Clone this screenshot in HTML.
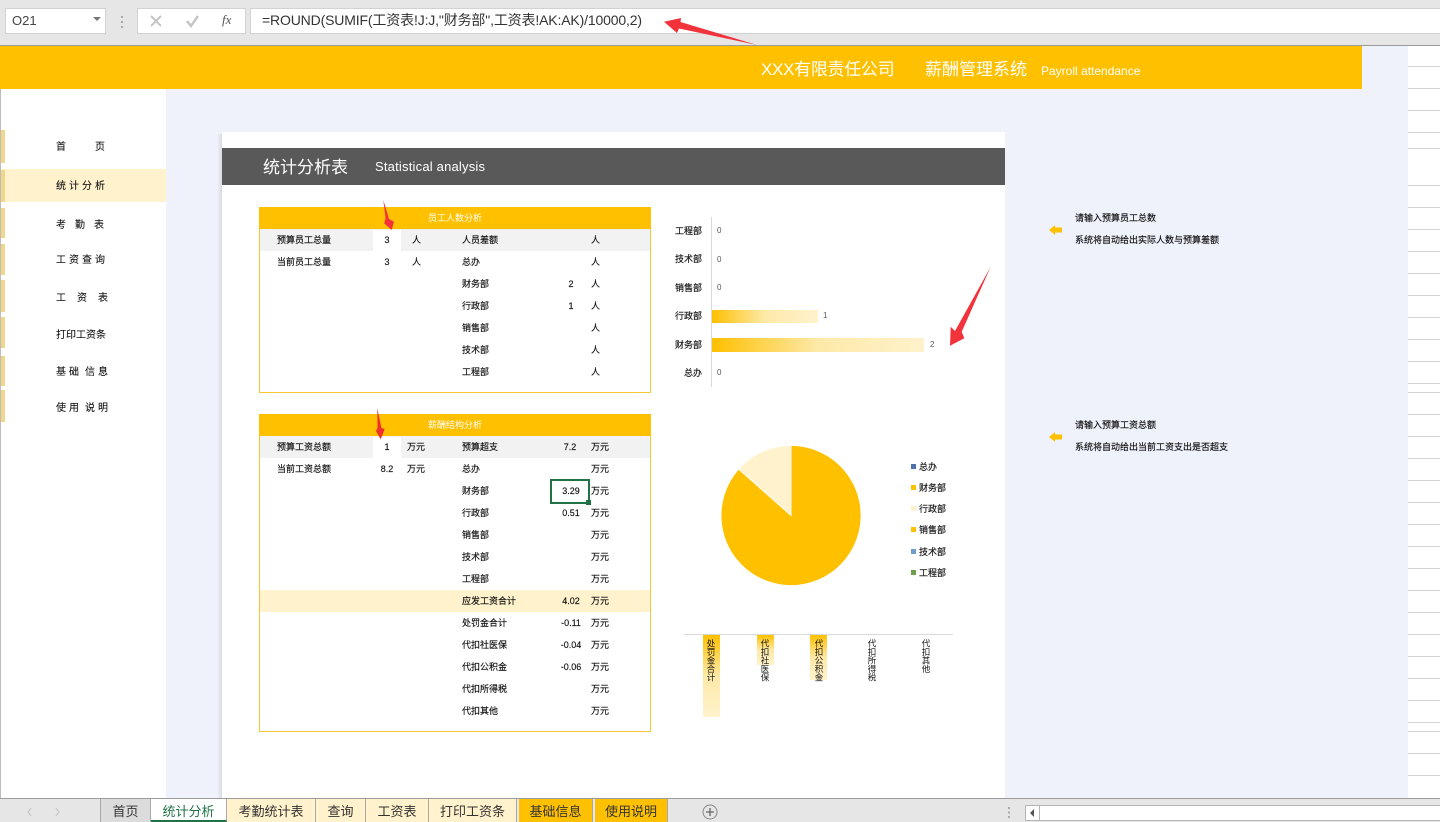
<!DOCTYPE html>
<html lang="zh-CN"><head><meta charset="utf-8"><title>统计分析</title>
<style>
html,body{margin:0;padding:0;width:1440px;height:822px;overflow:hidden;background:#fff}
body{position:relative;font-family:"Liberation Sans","Noto Sans CJK SC",sans-serif;color:#333}
.a{position:absolute}
.t{position:absolute;white-space:nowrap;font-size:9px;line-height:12px;color:#111;-webkit-text-stroke:.15px #111}
.w{color:#fff;-webkit-text-stroke:0}
.c{transform:translateX(-50%)}
.r{transform:translateX(-100%)}
.s{position:absolute;left:1px;width:4px;background:#f0d78c}
.g{position:absolute;left:1408px;width:32px;height:1px;background:#d4d4d4}
.v{position:absolute;font-size:8px;line-height:10px;color:#595959}
.l{position:absolute;left:911px;width:5px;height:5px}
.u{position:absolute;top:639px;writing-mode:vertical-rl;text-orientation:upright;font-size:8.5px;line-height:10px;color:#111;white-space:nowrap;transform:translateX(-50%)}
.tab{position:absolute;top:799px;height:23px;line-height:25px;text-align:center;font-size:13px;color:#333;border-right:1px solid #a8a8a8;box-sizing:border-box}
.n{font-size:10px;-webkit-text-stroke:.1px #111}
.gold{position:absolute;background:#f4c63a}
</style></head><body>

<!-- formula bar -->
<div class="a" style="left:0;top:0;width:1440px;height:45px;background:#e6e6e6"></div>
<div class="a" style="left:5px;top:8px;width:101px;height:26px;background:#fff;border:1px solid #d2d2d2;box-sizing:border-box"></div>
<div class="t" style="left:12px;top:14px;font-size:13px;line-height:14px;color:#444;-webkit-text-stroke:0">O21</div>
<svg class="a" style="left:92px;top:16px" width="10" height="6"><path d="M1 1H9L5 5Z" fill="#777"/></svg>
<svg class="a" style="left:120px;top:15px" width="4" height="14"><path d="M1 1h2v2H1zM1 6h2v2H1zM1 11h2v2H1z" fill="#aaa"/></svg>
<div class="a" style="left:137px;top:8px;width:109px;height:26px;background:#fff;border:1px solid #d2d2d2;box-sizing:border-box"></div>
<svg class="a" style="left:149px;top:14px" width="14" height="14"><path d="M2 2L12 12M12 2L2 12" stroke="#c4c4c4" stroke-width="2" fill="none"/></svg>
<svg class="a" style="left:185px;top:14px" width="15" height="14"><path d="M2 7L6 12L13 2" stroke="#c4c4c4" stroke-width="2.4" fill="none"/></svg>
<div class="t" style="left:222px;top:13px;font:italic 13px/14px 'Liberation Serif',serif;color:#555;-webkit-text-stroke:0">fx</div>
<div class="a" style="left:250px;top:8px;width:1190px;height:26px;background:#fff;border:1px solid #d2d2d2;border-right:0;box-sizing:border-box"></div>
<div class="t" style="left:262px;top:12px;font-size:14px;line-height:17px;color:#333;letter-spacing:-.15px;-webkit-text-stroke:0">=ROUND(SUMIF(工资表!J:J,"财务部",工资表!AK:AK)/10000,2)</div>
<div class="a" style="left:0;top:45px;width:1440px;height:1px;background:#9b9b9b"></div>

<!-- sheet backgrounds -->
<div class="a" style="left:166px;top:89px;width:1242px;height:709px;background:#eff2fa"></div>
<div class="a" style="left:1362px;top:46px;width:46px;height:43px;background:#eff2fa"></div>
<div class="a" style="left:0;top:46px;width:1362px;height:43px;background:#ffc000"></div>
<div class="a" style="left:0;top:89px;width:166px;height:709px;background:#fff"></div>
<div class="a" style="left:0;top:89px;width:1px;height:709px;background:#bdbdbd"></div>
<div class="g" style="top:66px"></div><div class="g" style="top:88px"></div><div class="g" style="top:110px"></div><div class="g" style="top:132px"></div><div class="g" style="top:148px"></div><div class="g" style="top:185px"></div><div class="g" style="top:207px"></div><div class="g" style="top:229px"></div><div class="g" style="top:251px"></div><div class="g" style="top:273px"></div><div class="g" style="top:295px"></div><div class="g" style="top:317px"></div><div class="g" style="top:339px"></div><div class="g" style="top:361px"></div><div class="g" style="top:383px"></div><div class="g" style="top:392px"></div><div class="g" style="top:414px"></div><div class="g" style="top:436px"></div><div class="g" style="top:458px"></div><div class="g" style="top:480px"></div><div class="g" style="top:502px"></div><div class="g" style="top:524px"></div><div class="g" style="top:546px"></div><div class="g" style="top:568px"></div><div class="g" style="top:590px"></div><div class="g" style="top:612px"></div><div class="g" style="top:634px"></div><div class="g" style="top:656px"></div><div class="g" style="top:678px"></div><div class="g" style="top:700px"></div><div class="g" style="top:722px"></div><div class="g" style="top:731px"></div><div class="g" style="top:753px"></div><div class="g" style="top:775px"></div>

<!-- header text -->
<div class="t w" style="left:761px;top:58px;font-size:17px;line-height:24px;letter-spacing:-.3px">XXX有限责任公司</div>
<div class="t w" style="left:925px;top:58px;font-size:17px;line-height:24px">薪酬管理系统</div>
<div class="t w" style="left:1041px;top:64px;font-size:12px;line-height:14px">Payroll attendance</div>

<!-- sidebar -->
<div class="a" style="left:1px;top:169px;width:165px;height:33px;background:#fff2cc"></div>
<div class="s" style="top:130px;height:33px"></div><div class="s" style="top:170px;height:32px"></div><div class="s" style="top:208px;height:30px"></div><div class="s" style="top:244px;height:31px"></div><div class="s" style="top:280px;height:32px"></div><div class="s" style="top:317px;height:31px"></div><div class="s" style="top:356px;height:30px"></div><div class="s" style="top:390px;height:32px"></div>
<div class="t n" style="left:56px;top:142px">首</div><div class="t n" style="left:95px;top:142px">页</div>
<div class="t n" style="left:56px;top:181px;letter-spacing:3px">统计分析</div>
<div class="t n" style="left:56px;top:220px">考</div><div class="t n" style="left:75px;top:220px">勤</div><div class="t n" style="left:94px;top:220px">表</div>
<div class="t n" style="left:56px;top:255px;letter-spacing:3px">工资查询</div>
<div class="t n" style="left:56px;top:293px">工</div><div class="t n" style="left:77px;top:293px">资</div><div class="t n" style="left:98px;top:293px">表</div>
<div class="t n" style="left:56px;top:330px">打印工资条</div>
<div class="t n" style="left:56px;top:367px;letter-spacing:3px">基础</div><div class="t n" style="left:85px;top:367px;letter-spacing:3px">信息</div>
<div class="t n" style="left:56px;top:403px;letter-spacing:3px">使用</div><div class="t n" style="left:85px;top:403px;letter-spacing:3px">说明</div>

<!-- card -->
<div class="a" style="left:217px;top:134px;width:5px;height:664px;background:linear-gradient(90deg,#eff2fa,#d9dbe2)"></div>
<div class="a" style="left:222px;top:132px;width:783px;height:666px;background:#fff"></div>
<div class="a" style="left:222px;top:148px;width:783px;height:37px;background:#595959"></div>
<div class="t w" style="left:263px;top:156px;font-size:17px;line-height:24px">统计分析表</div>
<div class="t w" style="left:375px;top:158px;font-size:13px;line-height:18px;letter-spacing:.2px">Statistical analysis</div>

<!-- table 1 -->
<div class="gold" style="left:259px;top:229px;width:1px;height:164px"></div>
<div class="gold" style="left:650px;top:229px;width:1px;height:164px"></div>
<div class="gold" style="left:259px;top:392px;width:392px;height:1px"></div>
<div class="a" style="left:259px;top:207px;width:392px;height:22px;background:#ffc000"></div>
<div class="a" style="left:260px;top:229px;width:390px;height:22px;background:#f2f2f2"></div>
<div class="a" style="left:373px;top:230px;width:28px;height:21px;background:#fff"></div>
<div class="t c w" style="left:455px;top:212px">员工人数分析</div>
<div class="t" style="left:277px;top:234px">预算员工总量</div><div class="t c" style="left:387px;top:234px">3</div><div class="t" style="left:412px;top:234px">人</div>
<div class="t" style="left:277px;top:256px">当前员工总量</div><div class="t c" style="left:387px;top:256px">3</div><div class="t" style="left:412px;top:256px">人</div>
<div class="t" style="left:462px;top:234px">人员差额</div><div class="t" style="left:591px;top:234px">人</div>
<div class="t" style="left:462px;top:256px">总办</div><div class="t" style="left:591px;top:256px">人</div>
<div class="t" style="left:462px;top:278px">财务部</div><div class="t c" style="left:571px;top:278px">2</div><div class="t" style="left:591px;top:278px">人</div>
<div class="t" style="left:462px;top:300px">行政部</div><div class="t c" style="left:571px;top:300px">1</div><div class="t" style="left:591px;top:300px">人</div>
<div class="t" style="left:462px;top:322px">销售部</div><div class="t" style="left:591px;top:322px">人</div>
<div class="t" style="left:462px;top:344px">技术部</div><div class="t" style="left:591px;top:344px">人</div>
<div class="t" style="left:462px;top:366px">工程部</div><div class="t" style="left:591px;top:366px">人</div>

<!-- table 2 -->
<div class="gold" style="left:259px;top:436px;width:1px;height:296px"></div>
<div class="gold" style="left:650px;top:436px;width:1px;height:296px"></div>
<div class="gold" style="left:259px;top:731px;width:392px;height:1px"></div>
<div class="a" style="left:259px;top:414px;width:392px;height:22px;background:#ffc000"></div>
<div class="a" style="left:260px;top:436px;width:390px;height:22px;background:#f2f2f2"></div>
<div class="a" style="left:373px;top:437px;width:28px;height:21px;background:#fff"></div>
<div class="a" style="left:260px;top:590px;width:390px;height:22px;background:#fff2cc"></div>
<div class="t c w" style="left:455px;top:419px">薪酬结构分析</div>
<div class="t" style="left:277px;top:441px">预算工资总额</div><div class="t c" style="left:387px;top:441px">1</div><div class="t" style="left:407px;top:441px">万元</div>
<div class="t" style="left:277px;top:463px">当前工资总额</div><div class="t c" style="left:387px;top:463px">8.2</div><div class="t" style="left:407px;top:463px">万元</div>
<div class="t" style="left:462px;top:441px">预算超支</div><div class="t c" style="left:570px;top:441px">7.2</div><div class="t" style="left:591px;top:441px">万元</div>
<div class="t" style="left:462px;top:463px">总办</div><div class="t" style="left:591px;top:463px">万元</div>
<div class="t" style="left:462px;top:485px">财务部</div><div class="t c" style="left:571px;top:485px">3.29</div><div class="t" style="left:591px;top:485px">万元</div>
<div class="t" style="left:462px;top:507px">行政部</div><div class="t c" style="left:571px;top:507px">0.51</div><div class="t" style="left:591px;top:507px">万元</div>
<div class="t" style="left:462px;top:529px">销售部</div><div class="t" style="left:591px;top:529px">万元</div>
<div class="t" style="left:462px;top:551px">技术部</div><div class="t" style="left:591px;top:551px">万元</div>
<div class="t" style="left:462px;top:573px">工程部</div><div class="t" style="left:591px;top:573px">万元</div>
<div class="t" style="left:462px;top:595px">应发工资合计</div><div class="t c" style="left:571px;top:595px">4.02</div><div class="t" style="left:591px;top:595px">万元</div>
<div class="t" style="left:462px;top:617px">处罚金合计</div><div class="t c" style="left:571px;top:617px">-0.11</div><div class="t" style="left:591px;top:617px">万元</div>
<div class="t" style="left:462px;top:639px">代扣社医保</div><div class="t c" style="left:571px;top:639px">-0.04</div><div class="t" style="left:591px;top:639px">万元</div>
<div class="t" style="left:462px;top:661px">代扣公积金</div><div class="t c" style="left:571px;top:661px">-0.06</div><div class="t" style="left:591px;top:661px">万元</div>
<div class="t" style="left:462px;top:683px">代扣所得税</div><div class="t" style="left:591px;top:683px">万元</div>
<div class="t" style="left:462px;top:705px">代扣其他</div><div class="t" style="left:591px;top:705px">万元</div>
<div class="a" style="left:550px;top:479px;width:40px;height:25px;border:2px solid #217346;box-sizing:border-box"></div>
<div class="a" style="left:586px;top:500px;width:5px;height:5px;background:#217346"></div>

<!-- bar chart -->
<div class="a" style="left:711px;top:217px;width:1px;height:170px;background:#d9d9d9"></div>
<div class="t r" style="left:702px;top:225px">工程部</div><div class="v" style="left:717px;top:226px">0</div>
<div class="t r" style="left:702px;top:253px">技术部</div><div class="v" style="left:717px;top:255px">0</div>
<div class="t r" style="left:702px;top:282px">销售部</div><div class="v" style="left:717px;top:283px">0</div>
<div class="t r" style="left:702px;top:310px">行政部</div><div class="v" style="left:823px;top:311px">1</div>
<div class="t r" style="left:702px;top:339px">财务部</div><div class="v" style="left:930px;top:340px">2</div>
<div class="t r" style="left:702px;top:367px">总办</div><div class="v" style="left:717px;top:368px">0</div>
<div class="a" style="left:712px;top:310px;width:106px;height:13px;background:linear-gradient(90deg,#ffc000,#fde9a8 50%,#fff2cc)"></div>
<div class="a" style="left:712px;top:338px;width:212px;height:14px;background:linear-gradient(90deg,#ffc000,#fde9a8 50%,#fff2cc)"></div>

<!-- pie -->
<svg class="a" style="left:715px;top:440px" width="152" height="152" viewBox="715 440 152 152">
<path d="M791 515.500V445.500A70 70 0 1 1 738.600 469.100Z" fill="#ffc000" stroke="#fff" stroke-width=".8"/>
<path d="M791 515.500L738.600 469.100A70 70 0 0 1 791 445.500Z" fill="#fff2cc" stroke="#fff" stroke-width=".8"/>
</svg>
<div class="l" style="top:464px;background:#4a74ab"></div><div class="t" style="left:919px;top:461px">总办</div>
<div class="l" style="top:485px;background:#ffc000"></div><div class="t" style="left:919px;top:482px">财务部</div>
<div class="l" style="top:506px;background:#fff2cc"></div><div class="t" style="left:919px;top:503px">行政部</div>
<div class="l" style="top:527px;background:#ffc000"></div><div class="t" style="left:919px;top:524px">销售部</div>
<div class="l" style="top:549px;background:#6f9bc8"></div><div class="t" style="left:919px;top:546px">技术部</div>
<div class="l" style="top:570px;background:#70a04a"></div><div class="t" style="left:919px;top:567px">工程部</div>

<!-- column chart -->
<div class="a" style="left:684px;top:634px;width:269px;height:1px;background:#d9d9d9"></div>
<div class="a" style="left:703px;top:635px;width:17px;height:82px;background:linear-gradient(180deg,#ffc000,#fde9a8 50%,#fff2cc)"></div>
<div class="a" style="left:757px;top:635px;width:17px;height:30px;background:linear-gradient(180deg,#ffc000,#fde9a8 50%,#fff2cc)"></div>
<div class="a" style="left:810px;top:635px;width:17px;height:45px;background:linear-gradient(180deg,#ffc000,#fde9a8 50%,#fff2cc)"></div>
<div class="u" style="left:711px">处罚金合计</div>
<div class="u" style="left:765px">代扣社医保</div>
<div class="u" style="left:819px">代扣公积金</div>
<div class="u" style="left:872px">代扣所得税</div>
<div class="u" style="left:926px">代扣其他</div>

<!-- notes -->
<svg class="a" style="left:1049px;top:224px" width="14" height="12"><path d="M0 6L6 1V3.500H13V8.500H6V11Z" fill="#ffc000"/></svg>
<div class="t" style="left:1075px;top:212px">请输入预算员工总数</div>
<div class="t" style="left:1075px;top:234px">系统将自动给出实际人数与预算差额</div>
<svg class="a" style="left:1049px;top:431px" width="14" height="12"><path d="M0 6L6 1V3.500H13V8.500H6V11Z" fill="#ffc000"/></svg>
<div class="t" style="left:1075px;top:419px">请输入预算工资总额</div>
<div class="t" style="left:1075px;top:441px">系统将自动给出当前工资支出是否超支</div>

<!-- red arrows -->
<svg class="a" style="left:0;top:0;pointer-events:none" width="1440" height="822">
<path d="M664 21.700L681 18L680.500 22L757 45L679 28.500L677 33Z" fill="#f2333c"/>
<path d="M383.300 200L389 219L394 221.700L391.700 230L384.300 223.500L385.500 218Z" fill="#f2333c"/>
<path d="M377.300 408.300L381.500 428L384.700 429L380.700 439.300L376 431L377.500 428Z" fill="#f0302a"/>
<path d="M990.700 266.700L961.700 331.700L964.300 338.300L950 345.700L950.700 326.700L955 331Z" fill="#f2333c"/>
</svg>

<!-- bottom bar -->
<div class="a" style="left:0;top:798px;width:1440px;height:24px;background:#e6e6e6"></div>
<div class="a" style="left:0;top:798px;width:1440px;height:1px;background:#9b9b9b"></div>
<svg class="a" style="left:25px;top:807px" width="36" height="10"><path d="M6 1L3 5L6 9M31 1L34 5L31 9" stroke="#c8c8c8" stroke-width="1.200" fill="none"/></svg>
<div class="a" style="left:100px;top:799px;width:1px;height:23px;background:#a8a8a8"></div>
<div class="tab" style="left:101px;width:50px;background:#dcdcdc">首页</div>
<div class="tab" style="left:151px;width:76px;background:#fff;color:#217346;border-bottom:2px solid #217346;height:23px">统计分析</div>
<div class="tab" style="left:227px;width:89px;background:#fff2cc">考勤统计表</div>
<div class="tab" style="left:316px;width:50px;background:#fff2cc">查询</div>
<div class="tab" style="left:366px;width:63px;background:#fff2cc">工资表</div>
<div class="tab" style="left:429px;width:88px;background:#fff2cc">打印工资条</div>
<div class="tab" style="left:519px;width:74px;background:#ffc000">基础信息</div>
<div class="tab" style="left:595px;width:73px;background:#ffc000">使用说明</div>
<svg class="a" style="left:702px;top:804px" width="16" height="16"><circle cx="8" cy="8" r="7" fill="none" stroke="#888" stroke-width="1"/><path d="M8 4V12M4 8H12" stroke="#666" stroke-width="1.300"/></svg>
<svg class="a" style="left:1007px;top:806px" width="4" height="13"><path d="M1 1h2v2H1zM1 5.500h2v2H1zM1 10h2v2H1z" fill="#aaa"/></svg>
<div class="a" style="left:1025px;top:805px;width:415px;height:16px;background:#fff;border-top:1px solid #b5b5b5;border-bottom:1px solid #b5b5b5;box-sizing:border-box"></div>
<div class="a" style="left:1025px;top:805px;width:15px;height:16px;background:#fff;border:1px solid #b5b5b5;box-sizing:border-box"></div>
<svg class="a" style="left:1029px;top:809px" width="6" height="8"><path d="M5 0V8L1 4Z" fill="#555"/></svg>
</body></html>
